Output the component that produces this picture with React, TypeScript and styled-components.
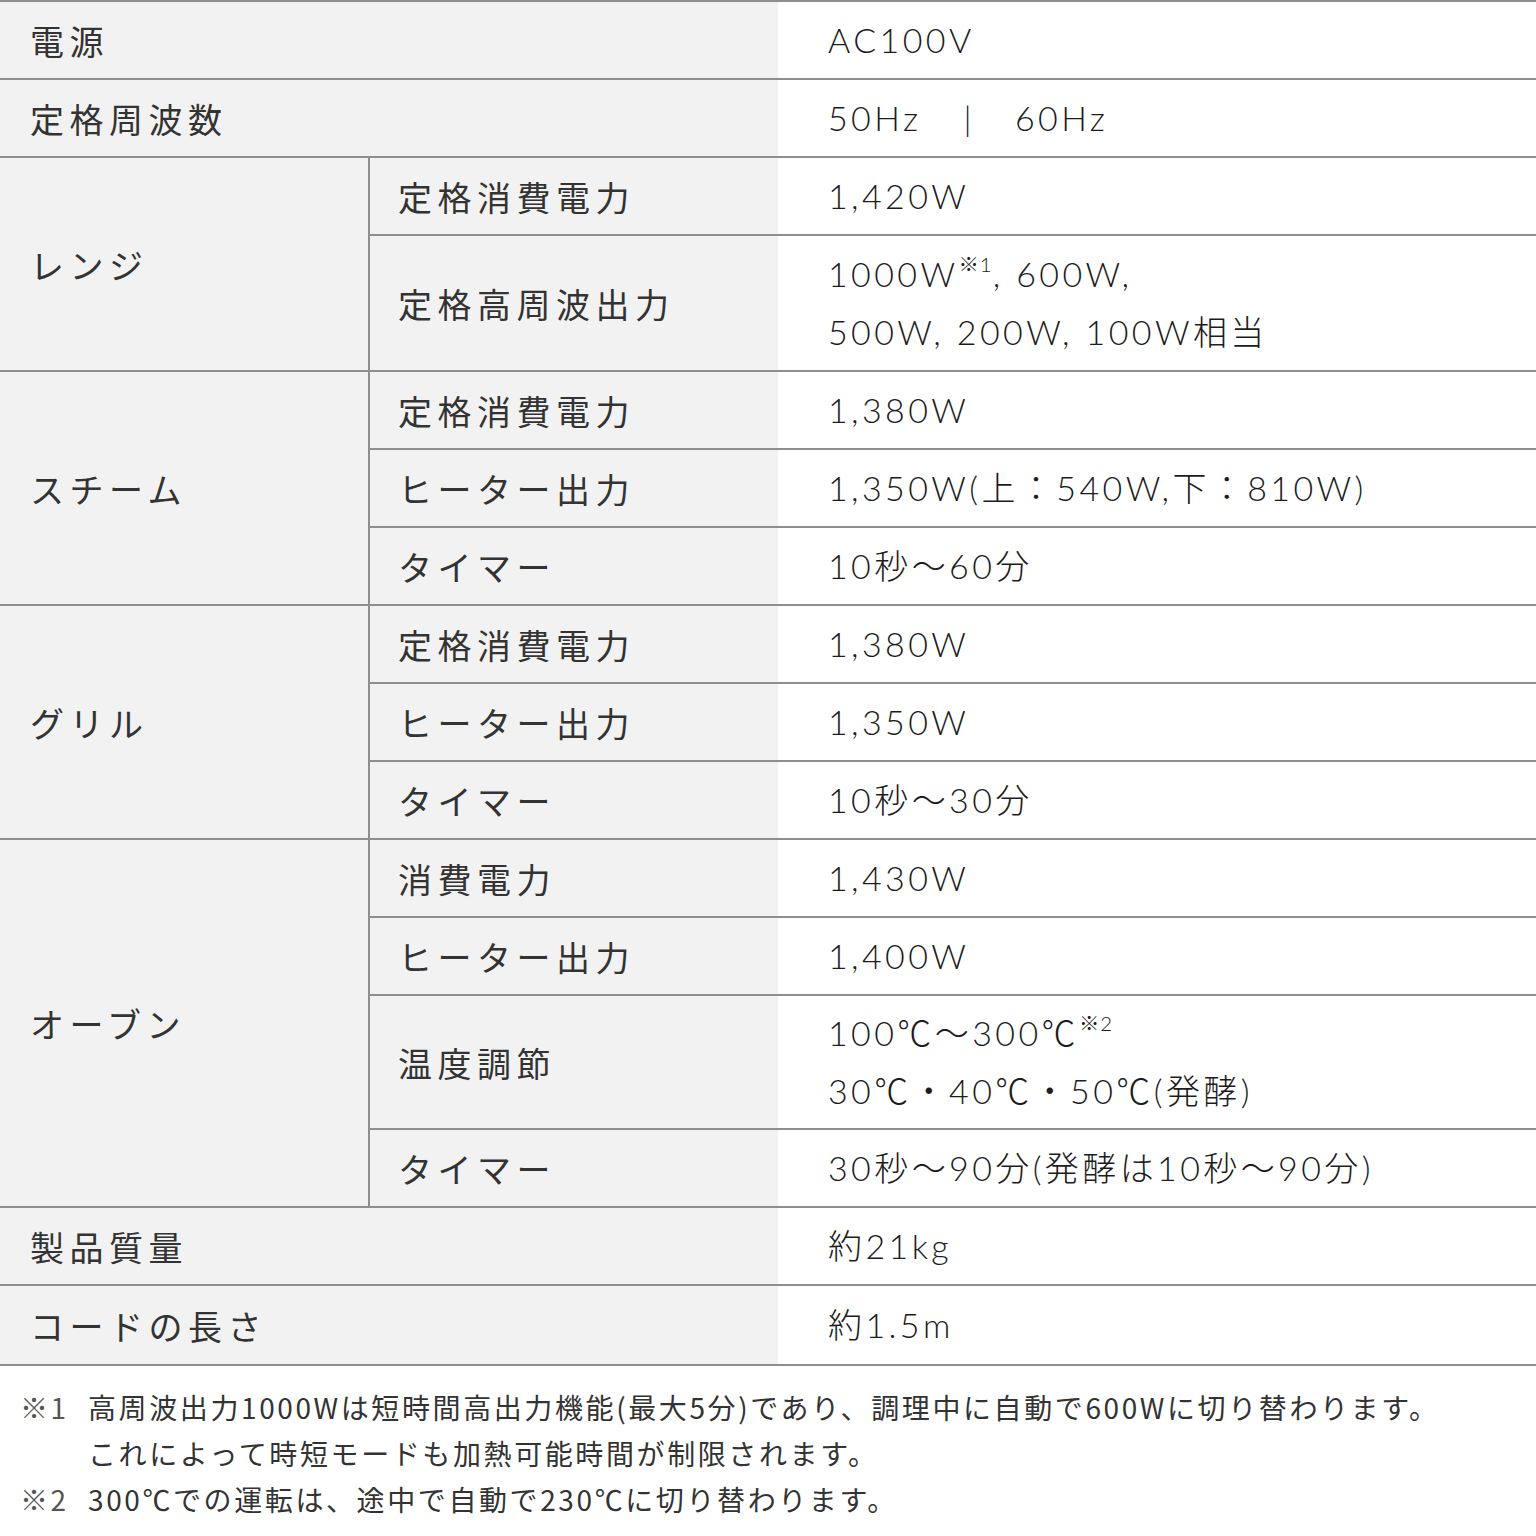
import styled, { createGlobalStyle } from "styled-components";

const GlobalStyle = createGlobalStyle`
    body {
        margin: 0;
        background: #ffffff;
        color: #333333;
        font-family: "Noto Sans CJK JP", sans-serif;
    }
`;

const LINE = "#8e8e8e";

const Table = styled.div`
    display: grid;
    grid-template-columns: 368px 410px 1fr;
    border-top: 2px solid ${LINE};
    width: 1536px;
`;

const Label = styled.div<{ $span?: number; $rows?: number }>`
    box-sizing: border-box;
    display: flex;
    align-items: center;
    background: #f2f2f2;
    border-bottom: 2px solid ${LINE};
    padding-left: 30px;
    font-family: "Noto Sans CJK JP", sans-serif;
    font-size: 34px;
    letter-spacing: 5.5px;
    color: #333333;
    ${(p) => (p.$span ? `grid-column: span ${p.$span};` : "")}
    ${(p) => (p.$rows ? `grid-row: span ${p.$rows};` : "")}
`;

const SubLabel = styled(Label)`
    border-left: 2px solid ${LINE};
    padding-left: 28px;
`;

const Value = styled.div<{ $height?: number }>`
    box-sizing: border-box;
    display: flex;
    flex-direction: column;
    justify-content: center;
    height: ${(p) => p.$height ?? 78}px;
    border-bottom: 2px solid ${LINE};
    padding-left: 50px;
    font-family: "Lato", "Noto Sans CJK JP", sans-serif;
    font-weight: 300;
    font-size: 34px;
    letter-spacing: 3.4px;
    line-height: 58px;
    color: #1c1c1c;
`;

const Sup = styled.sup`
    font-size: 0.6em;
    letter-spacing: 1px;
    vertical-align: 0.75em;
    line-height: 0;
`;

const Pipe = styled.span`
    margin: 0 40px 0 42px;
`;

const Notes = styled.div`
    padding: 18px 0 0 20px;
    font-family: "Noto Sans CJK JP", sans-serif;
    font-size: 28px;
    line-height: 46px;
    letter-spacing: 2.6px;
    color: #333333;
`;

const Note = styled.div`
    display: flex;
`;

const NoteMark = styled.span`
    width: 68px;
    flex-shrink: 0;
    color: #555555;
`;

type SubRow = { label: string; value: React.ReactNode; height?: number };

const groups: { name: string; rows: SubRow[] }[] = [
    {
        name: "レンジ",
        rows: [
            { label: "定格消費電力", value: "1,420W" },
            {
                label: "定格高周波出力",
                height: 136,
                value: (
                    <>
                        <span>
                            1000W<Sup>※1</Sup>, 600W,
                        </span>
                        <span>500W, 200W, 100W相当</span>
                    </>
                ),
            },
        ],
    },
    {
        name: "スチーム",
        rows: [
            { label: "定格消費電力", value: "1,380W" },
            { label: "ヒーター出力", value: "1,350W(上：540W,下：810W)" },
            { label: "タイマー", value: "10秒～60分" },
        ],
    },
    {
        name: "グリル",
        rows: [
            { label: "定格消費電力", value: "1,380W" },
            { label: "ヒーター出力", value: "1,350W" },
            { label: "タイマー", value: "10秒～30分" },
        ],
    },
    {
        name: "オーブン",
        rows: [
            { label: "消費電力", value: "1,430W" },
            { label: "ヒーター出力", value: "1,400W" },
            {
                label: "温度調節",
                height: 134,
                value: (
                    <>
                        <span>
                            100℃～300℃<Sup>※2</Sup>
                        </span>
                        <span>30℃・40℃・50℃(発酵)</span>
                    </>
                ),
            },
            { label: "タイマー", value: "30秒～90分(発酵は10秒～90分)" },
        ],
    },
];

const App = () => {
    return (
        <>
            <GlobalStyle />
            <Table>
                <Label $span={2}>電源</Label>
                <Value>AC100V</Value>
                <Label $span={2}>定格周波数</Label>
                <Value>
                    <span>
                        50Hz<Pipe>|</Pipe>60Hz
                    </span>
                </Value>
                {groups.map((g) => (
                    <>
                        <Label key={g.name} $rows={g.rows.length}>
                            {g.name}
                        </Label>
                        {g.rows.map((r, i) => (
                            <>
                                <SubLabel key={`${g.name}-l${i}`}>
                                    {r.label}
                                </SubLabel>
                                <Value key={`${g.name}-v${i}`} $height={r.height}>
                                    {r.value}
                                </Value>
                            </>
                        ))}
                    </>
                ))}
                <Label $span={2}>製品質量</Label>
                <Value>約21kg</Value>
                <Label $span={2}>コードの長さ</Label>
                <Value $height={80}>約1.5m</Value>
            </Table>
            <Notes>
                <Note>
                    <NoteMark>※1</NoteMark>
                    <span>
                        高周波出力1000Wは短時間高出力機能(最大5分)であり、調理中に自動で600Wに切り替わります。
                        <br />
                        これによって時短モードも加熱可能時間が制限されます。
                    </span>
                </Note>
                <Note>
                    <NoteMark>※2</NoteMark>
                    <span>300℃での運転は、途中で自動で230℃に切り替わります。</span>
                </Note>
            </Notes>
        </>
    );
};

export default App;
